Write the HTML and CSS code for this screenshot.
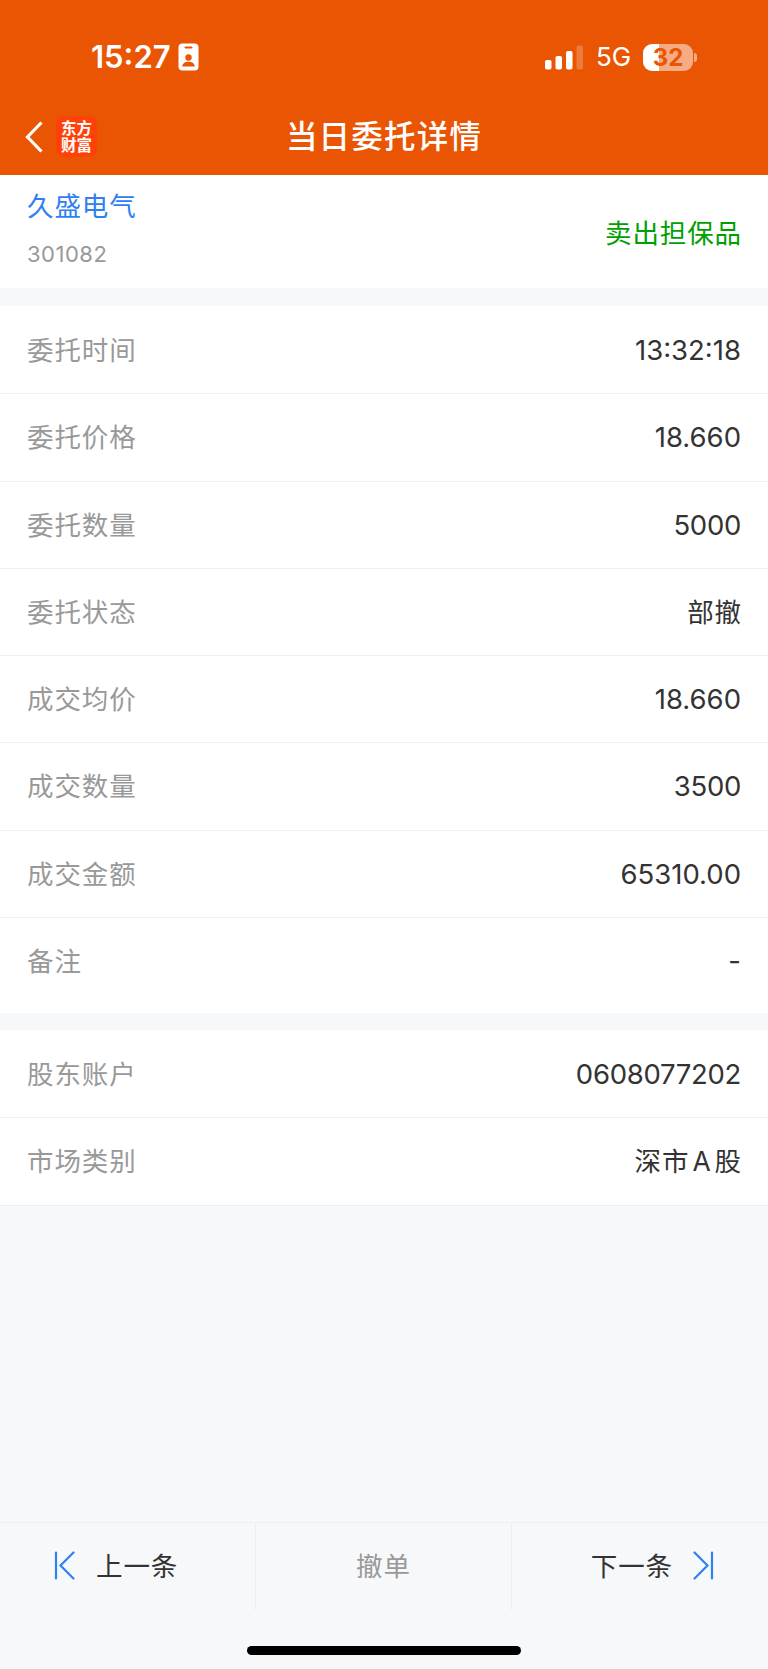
FILE: index.html
```html
<!DOCTYPE html>
<html lang="zh-CN">

<head>
  <meta charset="UTF-8">
  <meta name="viewport" content="width=device-width, initial-scale=1.0">
  <title>当日委托详情</title>
  <link rel="stylesheet" href="styles.css">
</head>

<body>
  <header class="header">
    <div class="status-bar">
      <span class="time">15:27</span>
      <svg class="id-badge" width="21" height="28" viewBox="0 0 21 28">
        <rect x="0.5" y="0.5" width="20" height="27" rx="4" fill="#fff"/>
        <rect x="6.5" y="3.5" width="8" height="2" rx="1" fill="#ea5504"/>
        <circle cx="10.5" cy="14.5" r="3.2" fill="#ea5504"/>
        <path d="M4.2 23.5c.5-3.4 3-4.7 6.3-4.7s5.8 1.3 6.3 4.7z" fill="#ea5504"/>
      </svg>
      <div class="status-right">
        <svg width="39" height="25" viewBox="0 0 39 25" fill="#fff">
          <rect x="0" y="15" width="6.5" height="9.5" rx="1.8"/>
          <rect x="10.5" y="11" width="6.5" height="13.5" rx="1.8"/>
          <rect x="21" y="6" width="6.5" height="18.5" rx="1.8"/>
          <rect x="31.5" y="0.5" width="6.5" height="24" rx="1.8" opacity="0.22"/>
        </svg>
        <span class="network">5G</span>
        <div class="battery"><span>32</span></div>
        <div class="battery-cap"></div>
      </div>
    </div>
    <div class="nav">
      <svg class="back" width="18" height="32" viewBox="0 0 18 32" fill="none" stroke="#fff" stroke-width="3.2">
        <path d="M16.5 1.5L2.5 16L16.5 30.5"/>
      </svg>
      <div class="logo">东方<br>财富</div>
      <h1 class="title">当日委托详情</h1>
    </div>
  </header>

  <main>
    <section class="stock">
      <div>
        <div class="stock-name">久盛电气</div>
        <div class="stock-code">301082</div>
      </div>
      <div class="direction">卖出担保品</div>
    </section>

    <section class="list order">
      <div class="row"><span class="label">委托时间</span><span class="value">13:32:18</span></div>
      <div class="row"><span class="label">委托价格</span><span class="value">18.660</span></div>
      <div class="row"><span class="label">委托数量</span><span class="value count">5000</span></div>
      <div class="row"><span class="label">委托状态</span><span class="value cn">部撤</span></div>
      <div class="row"><span class="label">成交均价</span><span class="value">18.660</span></div>
      <div class="row"><span class="label">成交数量</span><span class="value count">3500</span></div>
      <div class="row"><span class="label">成交金额</span><span class="value">65310.00</span></div>
      <div class="row"><span class="label">备注</span><span class="value">-</span></div>
    </section>

    <section class="list account">
      <div class="row"><span class="label">股东账户</span><span class="value count">0608077202</span></div>
      <div class="row"><span class="label">市场类别</span><span class="value cn">深市<span class="latin">A</span>股</span></div>
    </section>
  </main>

  <footer class="footer">
    <div class="actions">
      <div class="action prev">
        <svg width="21" height="29" viewBox="0 0 21 29" fill="none" stroke="#2f80f0" stroke-width="2.2" stroke-linecap="round">
          <path d="M2 1.5V27.5M19.5 1.5L6.5 14.5L19.5 27.5"/>
        </svg>
        <span>上一条</span>
      </div>
      <div class="action disabled"><span>撤单</span></div>
      <div class="action next">
        <span>下一条</span>
        <svg width="21" height="29" viewBox="0 0 21 29" fill="none" stroke="#2f80f0" stroke-width="2.2" stroke-linecap="round">
          <path d="M19 1.5V27.5M1.5 1.5L14.5 14.5L1.5 27.5"/>
        </svg>
      </div>
    </div>
    <div class="home-indicator"></div>
  </footer>
</body>

</html>
```

FILE: styles.css
```css
:root {
  --brand: #ea5504;
  --bg-color: #f7f8fa;
  --text-color: #333;
  --label-color: #999;
  --line-color: #eeeff0;
  --blue: #2f80f0;
  --green: #00a000;
}

* {
  box-sizing: border-box;
}

body {
  margin: 0;
  height: 1669px;
  display: flex;
  flex-direction: column;
  background: var(--bg-color);
  color: var(--text-color);
  font-family: Inter, "Noto Sans CJK SC", sans-serif;
  font-size: 26.5px;
}

.header {
  height: 175px;
  background: var(--brand);
  color: #fff;
}

.status-bar {
  height: 100px;
  padding: 14px 71px 0 91px;
  display: flex;
  align-items: center;
}

.time {
  width: 87px;
  font-size: 31px;
  font-weight: 600;
  line-height: 36px;
}

.status-right {
  margin-left: auto;
  display: flex;
  align-items: center;
}

.network {
  width: 47px;
  margin-left: 12px;
  font-size: 26px;
  line-height: 32px;
}

.battery {
  width: 50px;
  height: 27px;
  border-radius: 9px;
  background: linear-gradient(90deg, #fff 16px, #f5ab83 16px);
  color: var(--brand);
  font-size: 24px;
  font-weight: 700;
  line-height: 27px;
  text-align: center;
}

.battery-cap {
  width: 3px;
  height: 9px;
  margin-left: 1px;
  border-radius: 0 4px 4px 0;
  background: #f5ab83;
}

.nav {
  height: 75px;
  padding: 0 25px 2px;
  display: grid;
  grid-template-columns: 31px 140px 1fr 171px;
  align-items: center;
}

.logo {
  width: 41px;
  height: 41px;
  padding-top: 4px;
  border-radius: 8px;
  background: #ff4107;
  font-size: 15.5px;
  font-weight: 700;
  line-height: 17px;
  text-align: center;
}

.title {
  margin: 0 -10px;
  font-size: 31.5px;
  font-weight: 500;
  letter-spacing: 1.2px;
  line-height: 44px;
  text-align: center;
  white-space: nowrap;
}

.stock {
  height: 113px;
  padding: 12px 27px 0;
  display: flex;
  justify-content: space-between;
  background: #fff;
}

.stock-name {
  color: var(--blue);
  letter-spacing: 0.9px;
  line-height: 38px;
}

.stock-code {
  margin-top: 14px;
  color: var(--label-color);
  font-size: 22px;
  letter-spacing: 0.5px;
  line-height: 30px;
}

.direction {
  margin-right: -1px;
  padding-top: 27px;
  color: var(--green);
  letter-spacing: 0.9px;
  line-height: 38px;
}

.list {
  background: #fff;
}

.order {
  margin-top: 18px;
  padding-top: 1px;
  padding-bottom: 8px;
}

.account {
  margin-top: 17px;
  padding-top: 1px;
}

.row {
  height: 87.25px;
  padding: 0 27px;
  display: flex;
  align-items: center;
  justify-content: space-between;
  border-bottom: 1px solid var(--line-color);
}

.order .row:last-child {
  border-bottom: none;
}

.label {
  padding-bottom: 3px;
  color: var(--label-color);
  letter-spacing: 0.9px;
}

.value {
  font-size: 27.5px;
}

.count {
  letter-spacing: -0.3px;
}

.value.cn {
  margin-right: -1px;
  padding-bottom: 3px;
  font-size: 26.5px;
  letter-spacing: 0.9px;
}

.latin {
  margin: 0 3px;
}

.footer {
  height: 147px;
  margin-top: auto;
  border-top: 1px solid var(--line-color);
}

.actions {
  height: 87px;
  display: grid;
  grid-template-columns: repeat(3, 1fr);
}

.action {
  padding-bottom: 2px;
  display: flex;
  align-items: center;
  justify-content: center;
  border-right: 1px solid var(--line-color);
  letter-spacing: 0.9px;
}

.action span {
  padding-bottom: 3px;
}

.action:last-child {
  border-right: none;
}

.prev {
  justify-content: flex-start;
  padding-left: 54px;
  gap: 21px;
}

.next {
  justify-content: flex-end;
  padding-right: 54px;
  gap: 20px;
}

.disabled {
  color: var(--label-color);
}

.home-indicator {
  width: 274px;
  height: 9px;
  margin: 36px auto 0;
  border-radius: 5px;
  background: #000;
}
```
